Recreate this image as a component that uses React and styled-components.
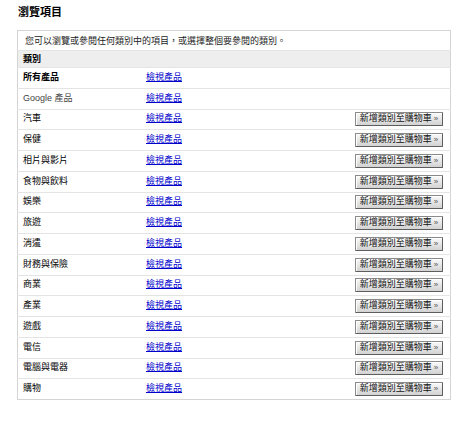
import React from 'react';
import styled, { createGlobalStyle } from 'styled-components';

const GlobalStyle = createGlobalStyle`
  html, body {
    margin: 0;
    padding: 0;
    background: #fff;
  }
  body {
    font-family: "Liberation Sans", "Noto Sans CJK TC", sans-serif;
    color: #000;
  }
`;

const Page = styled.div`
  width: 460px;
  padding: 5px 10px 0 17px;
  box-sizing: border-box;
`;

const Title = styled.h1`
  font-size: 11px;
  font-weight: bold;
  margin: 0 0 8px 1px;
  line-height: 14px;
  height: 17px;
`;

const Table = styled.table`
  width: 434px;
  border-collapse: collapse;
  border: 1px solid #d4d4d4;
  font-size: 9px;
  line-height: 12px;
`;

const IntroCell = styled.td`
  height: 19px;
  padding: 0 0 0 7px;
  color: #222;
  border-bottom: 1px solid #e4e4e4;
`;

const HeadCell = styled.th`
  height: 16px;
  padding: 0 0 0 5px;
  background: #eeeeee;
  text-align: left;
  font-weight: bold;
  border-bottom: 1px solid #e4e4e4;
`;

const Row = styled.tr`
  height: 20.75px;
  border-bottom: 1px solid #e4e4e4;
  &:last-child {
    border-bottom: none;
  }
`;

const NameCell = styled.td`
  width: 118px;
  padding: 0 0 2px 5px;
  color: ${(p) => (p.$muted ? '#444' : '#000')};
  font-weight: ${(p) => (p.$bold ? 'bold' : 'normal')};
`;

const LinkCell = styled.td`
  padding: 0 0 2px 5px;
`;

const Link = styled.a`
  color: #0000cc;
  text-decoration: underline;
  cursor: pointer;
`;

const ActionCell = styled.td`
  text-align: right;
  padding: 0 7px 0 0;
`;

const AddButton = styled.button`
  width: 88px;
  height: 14px;
  padding: 0 0 1px 0;
  border: 1px solid #8a8a8a;
  border-right-color: #5e5e5e;
  border-bottom-color: #5e5e5e;
  border-radius: 1px;
  background: linear-gradient(#fafafa, #d2d2d2);
  box-shadow: inset 1px 1px 0 #fff;
  font-family: "Liberation Sans", "Noto Sans CJK TC", sans-serif;
  font-size: 9px;
  line-height: 11px;
  color: #111;
  vertical-align: middle;
`;

const Arrow = styled.span`
  font-size: 8px;
  color: #555;
  margin-left: 2px;
`;

const categories = [
  { name: '所有產品', bold: true, add: false },
  { name: 'Google 產品', muted: true, add: false },
  { name: '汽車', add: true },
  { name: '保健', add: true },
  { name: '相片與影片', add: true },
  { name: '食物與飲料', add: true },
  { name: '娛樂', add: true },
  { name: '旅遊', add: true },
  { name: '消遣', add: true },
  { name: '財務與保險', add: true },
  { name: '商業', add: true },
  { name: '產業', add: true },
  { name: '遊戲', add: true },
  { name: '電信', add: true },
  { name: '電腦與電器', add: true },
  { name: '購物', add: true },
];

const App = () => (
  <Page>
    <GlobalStyle />
    <Title>瀏覽項目</Title>
    <Table>
      <tbody>
        <tr>
          <IntroCell colSpan={3}>
            您可以瀏覽或參閱任何類別中的項目，或選擇整個要參閱的類別。
          </IntroCell>
        </tr>
        <tr>
          <HeadCell colSpan={3}>類別</HeadCell>
        </tr>
        {categories.map((c) => (
          <Row key={c.name}>
            <NameCell $bold={c.bold} $muted={c.muted}>
              {c.name}
            </NameCell>
            <LinkCell>
              <Link>檢視產品</Link>
            </LinkCell>
            <ActionCell>
              {c.add && (
                <AddButton>
                  新增類別至購物車<Arrow>»</Arrow>
                </AddButton>
              )}
            </ActionCell>
          </Row>
        ))}
      </tbody>
    </Table>
  </Page>
);

export default App;
